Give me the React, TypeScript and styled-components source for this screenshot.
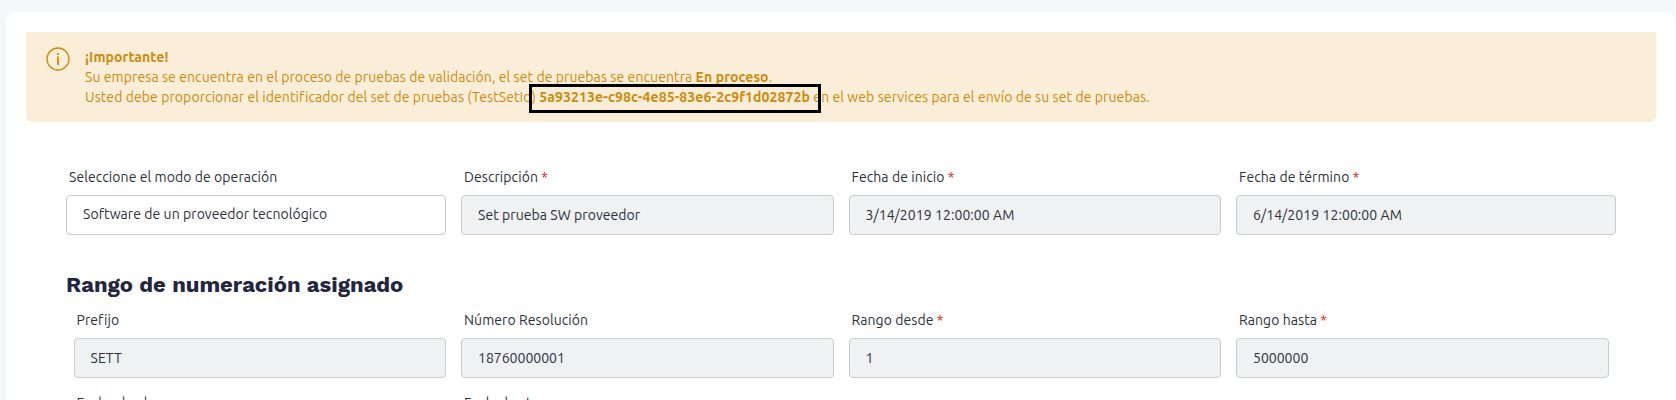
import React from "react";
import styled, { createGlobalStyle } from "styled-components";

const Global = createGlobalStyle`
  * { box-sizing: border-box; }
  html, body { margin: 0; height: 400px; overflow: hidden; background: #f5f7f9; }
  body { font-family: Ubuntu, "Noto Sans", sans-serif; font-size: 14px; line-height: 20px; color: #2b303b; }
`;
const Page = styled.main`height: 400px; padding: 12px 0 0 6px; overflow: hidden;`;
const Card = styled.section`height: 420px; padding: 20px; background: #fff; border-radius: 10px;`;
const Alert = styled.div`
  display: flex; height: 90px; padding: 15px 20px; gap: 15px;
  background: #fbeed8; color: #cb8b0c; border-radius: 0 0 6px 6px;
`;
const AlertIcon = styled.svg`flex: none; width: 24px; height: 24px;`;
const AlertText = styled.div`white-space: nowrap; letter-spacing: 0.083px;`;
const Line = styled.div`height: 20px;`;
const Strong = styled.strong`font-weight: 700; letter-spacing: 0.105px;`;
const Marked = styled.span`position: relative;`;
const Frame = styled.span`
  position: absolute; left: -10px; top: -5px; width: 292px; height: 29px; border: 3px solid #000;
`;
const Form = styled.div`padding: 45px 40px 0;`;
const Row = styled.div<{ $wide?: boolean }>`
  display: grid; grid-template-columns: repeat(4, 1fr);
  > * { padding: 0 7.5px; }
  ${(p) => p.$wide && "> :first-child { padding-left: 0; } > :last-child { padding-right: 0; }"}
`;
const Field = styled.div`height: 83px; white-space: nowrap;`;
const Label = styled.label`
  display: block; height: 28px; padding-left: 3px; letter-spacing: 0.07px;
`;
const Required = styled.span`color: #d42a20;`;
const Control = styled.div<{ $select?: boolean; $numeric?: boolean }>`
  height: 40px; padding: ${(p) => (p.$select ? "8px" : "9px")} 16px; border: 1px solid #c9cbcd; border-radius: 4px;
  background: ${(p) => (p.$select ? "#fff" : "#f0f1f3")}; letter-spacing: ${(p) => (p.$numeric ? "0" : "0.07px")};
`;
const Heading = styled.h2`
  margin: 20px 0 0; height: 40px; font: 700 22px/29px "Work Sans", Inter, sans-serif; color: #23263f; white-space: nowrap;
`;

type FieldData = { label: string; value: string; required?: boolean; select?: boolean };
const operation: FieldData[] = [
  { label: "Seleccione el modo de operación", value: "Software de un proveedor tecnológico", select: true },
  { label: "Descripción", value: "Set prueba SW proveedor", required: true },
  { label: "Fecha de inicio", value: "3/14/2019 12:00:00 AM", required: true },
  { label: "Fecha de término", value: "6/14/2019 12:00:00 AM", required: true },
];
const range: FieldData[] = [
  { label: "Prefijo", value: "SETT" },
  { label: "Número Resolución", value: "18760000001" },
  { label: "Rango desde", value: "1", required: true },
  { label: "Rango hasta", value: "5000000", required: true },
];
const validity: FieldData[] = [
  { label: "Fecha desde", value: "" },
  { label: "Fecha hasta", value: "" },
];

const Fields = ({ items, wide }: { items: FieldData[]; wide?: boolean }) => (
  <Row $wide={wide}>
    {items.map((f) => (
      <Field key={f.label}>
        <Label>{f.label}{f.required && <Required> *</Required>}</Label>
        <Control $select={f.select} $numeric={/^\d+$/.test(f.value)}>{f.value}</Control>
      </Field>
    ))}
  </Row>
);

export default function App() {
  return (
    <Page>
      <Global />
      <Card>
        <Alert>
          <AlertIcon viewBox="0 0 24 24" fill="none" stroke="currentColor">
            <circle cx="12" cy="12" r="11" strokeWidth="1.3" />
            <path d="M12 9.5V18M12 6v2" strokeWidth="1.8" />
          </AlertIcon>
          <AlertText>
            <Line><Strong>¡Importante!</Strong></Line>
            <Line>
              Su empresa se encuentra en el proceso de pruebas de validación, el set de pruebas se encuentra{" "}
              <Strong>En proceso</Strong>.
            </Line>
            <Line>
              Usted debe proporcionar el identificador del set de pruebas (TestSetId){" "}
              <Marked><Strong>5a93213e-c98c-4e85-83e6-2c9f1d02872b</Strong><Frame /></Marked>
              {" "}en el web services para el envío de su set de pruebas.
            </Line>
          </AlertText>
        </Alert>
        <Form>
          <Fields items={operation} wide />
          <Heading>Rango de numeración asignado</Heading>
          <Fields items={range} />
          <Fields items={validity} />
        </Form>
      </Card>
    </Page>
  );
}
